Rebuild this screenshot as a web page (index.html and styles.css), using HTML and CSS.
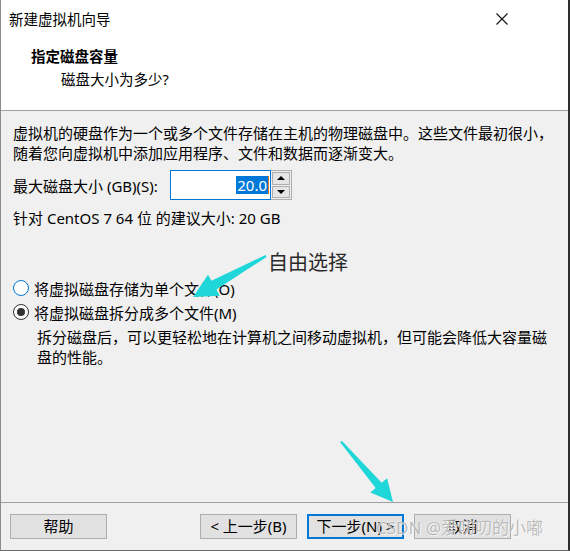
FILE: index.html
```html
<!DOCTYPE html>
<html lang="zh-CN">
<head>
<meta charset="utf-8">
<title>新建虚拟机向导</title>
<link rel="stylesheet" href="styles.css">
</head>
<body>
<div class="window">
  <div class="header">
    <div class="titlebar">
      <span class="title">新建虚拟机向导</span>
      <svg class="close" width="12" height="12" viewBox="0 0 12 12"><path d="M0.5 0.5 L11.5 11.5 M11.5 0.5 L0.5 11.5" stroke="#111" stroke-width="1.1" fill="none"/></svg>
    </div>
    <div class="heading">指定磁盘容量</div>
    <div class="subheading">磁盘大小为多少?</div>
  </div>
  <div class="content">
    <p class="intro">虚拟机的硬盘作为一个或多个文件存储在主机的物理磁盘中。这些文件最初很小，随着您向虚拟机中添加应用程序、文件和数据而逐渐变大。</p>
    <div class="size-row">
      <span class="label">最大磁盘大小 (GB)(S):</span>
      <div class="spinner">
        <div class="spin-input"><span class="sel">20.0</span><span class="caret"></span></div>
        <div class="spin-btns">
          <div class="spin-btn"><span class="tri-up"></span></div>
          <div class="spin-btn"><span class="tri-down"></span></div>
        </div>
      </div>
    </div>
    <div class="recommend">针对 CentOS 7 64 位 的建议大小: 20 GB</div>
    <div class="options">
      <div class="radio-row"><span class="radio focus"></span><span>将虚拟磁盘存储为单个文件(O)</span></div>
      <div class="radio-row"><span class="radio checked"></span><span>将虚拟磁盘拆分成多个文件(M)</span></div>
      <p class="desc">拆分磁盘后，可以更轻松地在计算机之间移动虚拟机，但可能会降低大容量磁盘的性能。</p>
    </div>
  </div>
  <div class="footer">
    <button class="btn">帮助</button>
    <div class="spacer"></div>
    <button class="btn">&lt; 上一步(B)</button>
    <button class="btn default">下一步(N) &gt;</button>
    <button class="btn">取消</button>
  </div>

  <div class="note">自由选择</div>
  <svg class="arrows" width="570" height="551" viewBox="0 0 570 551">
    <polygon fill="#1fd6d8" points="266.5,257 216.4,289.6 219.8,295.7 193,297 208,274.7 211.4,280.8 265.5,255"/>
    <polygon fill="#1fd6d8" points="340,442 375.7,487.9 370.3,492.4 393,502 387.1,478.2 381.7,482.7 342,441"/>
  </svg>
  <div class="watermark">CSDN @爱叨叨的小嘟</div>
</div>
</body>
</html>
```
FILE: styles.css
```css
* { box-sizing: border-box; }
html, body { margin: 0; padding: 0; }
body {
  width: 570px;
  height: 551px;
  overflow: hidden;
  font-family: "Segoe UI", "Noto Sans", "Noto Sans CJK SC", sans-serif;
  font-size: 15px;
  color: #000;
  background: #f0f0f0;
}
.window {
  position: relative;
  width: 570px;
  height: 551px;
  display: flex;
  flex-direction: column;
  border-left: 1px solid #8c8c8c;
  border-right: 2px solid #2e2e2e;
  border-bottom: 1px solid #6a6a6a;
  background: #f0f0f0;
}
.header {
  background: #fff;
  height: 111px;
  border-bottom: 1px solid #a0a0a0;
  flex: none;
}
.titlebar {
  height: 37px;
  display: flex;
  align-items: center;
  justify-content: space-between;
  padding: 0 60px 0 8px;
}
.title { font-size: 14.5px; line-height: 20px; }
.close { display: block; margin-top: 1px; }
.heading {
  margin: 9px 0 0 30px;
  font-weight: bold;
  font-size: 14.5px;
  line-height: 20px;
}
.subheading {
  margin: 3px 0 0 60px;
  font-size: 14.5px;
  line-height: 20px;
}
.content {
  flex: 1;
  padding: 12px 0 0 12px;
}
.intro {
  margin: 0;
  width: 550px;
  line-height: 20px;
}
.size-row {
  margin-top: 7px;
  display: flex;
  align-items: center;
  height: 30px;
}
.label { width: 157px; }
.spinner { display: flex; height: 30px; }
.spin-input {
  width: 101px;
  height: 30px;
  border: 1px solid #0078d7;
  background: #fff;
  display: flex;
  align-items: center;
  justify-content: flex-end;
  padding-right: 1px;
}
.sel {
  background: #0078d7;
  color: #fff;
  line-height: 18px;
  padding: 0 1px;
}
.caret { width: 1px; height: 18px; background: #e07a1f; }
.spin-btns {
  width: 21px;
  height: 30px;
  border: 1px solid #adadad;
  border-left: none;
  display: flex;
  flex-direction: column;
  background: #f0f0f0;
  padding: 1px;
  gap: 1px;
}
.spin-btn {
  flex: 1;
  border: 1px solid #adadad;
  background: #e5e5e5;
  display: flex;
  align-items: center;
  justify-content: center;
}
.tri-up, .tri-down { width: 0; height: 0; border-left: 4px solid transparent; border-right: 4px solid transparent; }
.tri-up { border-bottom: 4px solid #000; }
.tri-down { border-top: 4px solid #000; }
.recommend { margin-top: 8px; line-height: 20px; }
.options { margin-top: 50px; }
.radio-row {
  display: flex;
  align-items: center;
  gap: 5px;
  height: 20px;
  margin-bottom: 4px;
}
.radio {
  width: 16px;
  height: 16px;
  border-radius: 50%;
  background: #fff;
  border: 1px solid #333;
  display: flex;
  align-items: center;
  justify-content: center;
}
.radio.focus { border-color: #0078d7; }
.radio.checked::after {
  content: "";
  width: 8px;
  height: 8px;
  border-radius: 50%;
  background: #333;
}
.desc {
  margin: 5px 0 0 24px;
  width: 521px;
  line-height: 20px;
}
.footer {
  flex: none;
  height: 48px;
  border-top: 1px solid #a0a0a0;
  display: flex;
  align-items: flex-start;
  padding: 11px 57px 0 9px;
  gap: 10px;
}
.spacer { flex: 1; }
.btn {
  width: 97px;
  height: 25px;
  font: inherit;
  font-size: 15px;
  background: #e1e1e1;
  border: 1px solid #adadad;
  color: #000;
  padding: 0;
  line-height: 21px;
}
.btn.default { border: 2px solid #0078d7; }
.note {
  position: absolute;
  left: 267px;
  top: 250px;
  font-size: 20px;
  line-height: 26px;
  color: #2a2a2a;
}
.arrows { position: absolute; left: -1px; top: 0; pointer-events: none; }
.watermark {
  position: absolute;
  left: 375px;
  top: 516px;
  font-size: 17px;
  line-height: 24px;
  color: rgba(120, 120, 120, 0.5);
  text-shadow: 0 0 1px #fff, 1px 1px 0 rgba(255,255,255,0.6);
  white-space: nowrap;
}
```
